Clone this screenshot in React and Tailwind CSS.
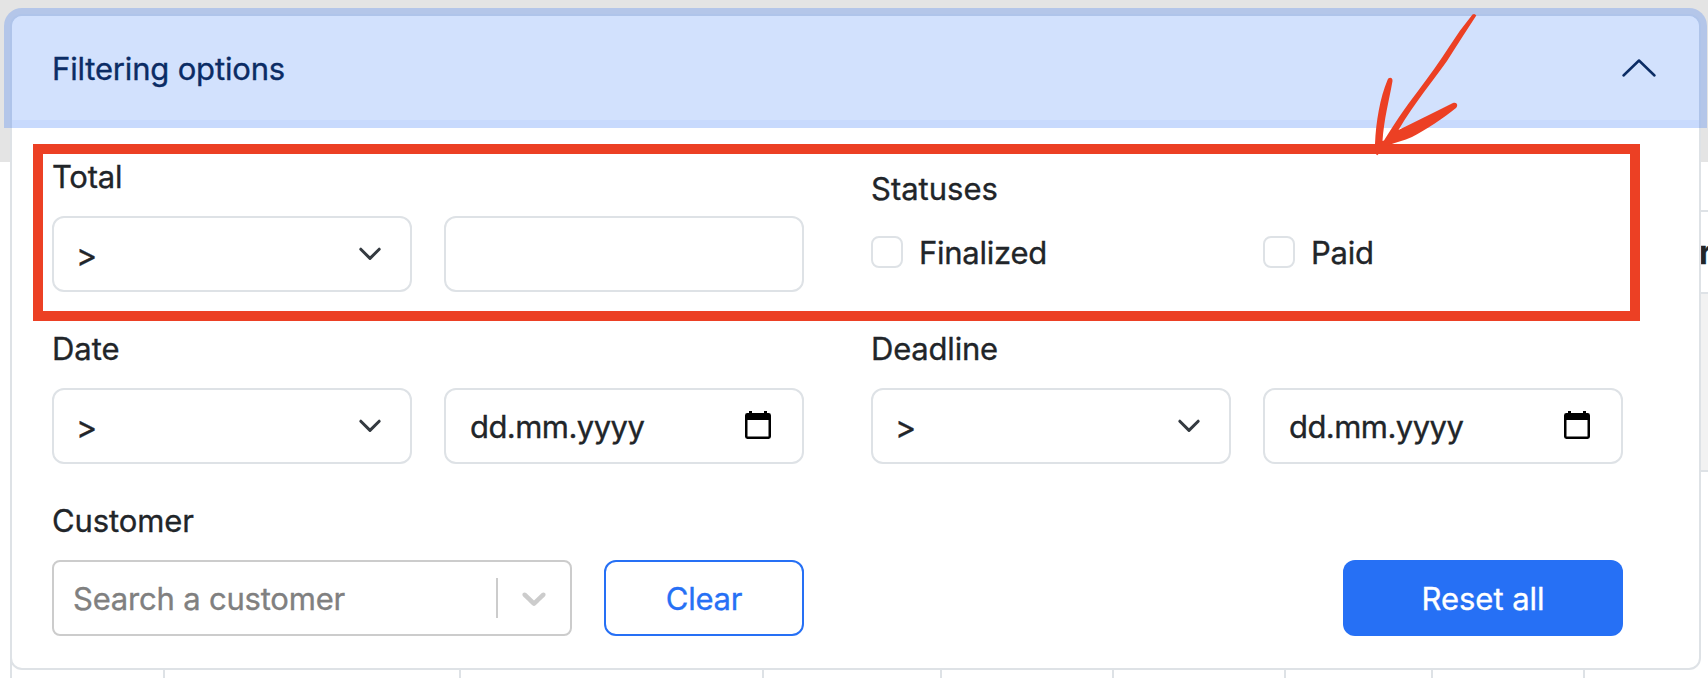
import React from "react";

const columns = [
  { id: "a", cls: "w-[155px]" },
  { id: "b", cls: "w-[296px]" },
  { id: "c", cls: "w-[303px]" },
  { id: "d", cls: "w-[178px]" },
  { id: "e", cls: "w-[172px]" },
  { id: "f", cls: "w-[172px]" },
  { id: "g", cls: "w-[147px]" },
  { id: "h", cls: "w-[152px]" },
];

function TableBackdrop() {
  return (
    <div className="absolute inset-0 flex flex-col bg-white">
      <div className="h-[162px] shrink-0 bg-[#e4e4e4]" />
      <div className="flex h-[310px] shrink-0 justify-end">
        <div className="flex w-[9px] flex-col overflow-hidden">
          <div className="h-[50px] shrink-0 border-b-2 border-[#dee2e6]" />
          <div className="flex h-[82px] shrink-0 items-center border-b-2 border-[#dee2e6] pt-[2px] text-[32px] font-bold">
            r
          </div>
          <div className="h-[178px] shrink-0 border-b-2 border-[#dee2e6] bg-[#f2f2f2]" />
        </div>
      </div>
      <div className="ml-[10px] flex grow">
        {columns.map((c, i) => (
          <div
            key={c.id}
            className={`${c.cls} shrink-0 border-r-2 border-[#dee2e6] ${i === 0 ? "border-l-2" : ""}`}
          />
        ))}
      </div>
    </div>
  );
}

function Label({ children, className = "" }) {
  return <div className={`h-12 leading-[50px] ${className}`}>{children}</div>;
}

function Select() {
  return (
    <button className="flex h-[76px] w-[360px] shrink-0 items-center justify-between rounded-xl border-2 border-[#dee2e6] bg-white pl-[22px] pr-[24px]">
      <span className="pt-[3px] text-[32px]">&gt;</span>
      <svg className="h-8 w-8" viewBox="0 0 16 16" fill="none">
        <path d="m3.4 5.7 4.6 4.6 4.6-4.6" transform="translate(0 -.1)" stroke="#343a40" strokeWidth="1.5" strokeLinecap="round" strokeLinejoin="round" />
      </svg>
    </button>
  );
}

function DateInput() {
  return (
    <div className="flex h-[76px] w-[360px] shrink-0 items-center justify-between rounded-xl border-2 border-[#dee2e6] bg-white pl-[24px] pr-[31px]">
      <span className="pt-[2px] tracking-[-0.55px]">dd.mm.yyyy</span>
      <svg className="mb-[2px] h-7 w-[26px]" viewBox="0 0 26 28">
        <path d="M4 0h3v2h12V0h3v2h1.600A2.400 2.400 0 0 1 26 4.400V25.600A2.400 2.400 0 0 1 23.600 28H2.400A2.400 2.400 0 0 1 0 25.600V4.400A2.400 2.400 0 0 1 2.400 2H4zM2.500 9v16.500h21V9z" fill="#000" fillRule="evenodd" />
      </svg>
    </div>
  );
}

function Check({ label, className }) {
  return (
    <label className="flex w-[360px] items-center">
      <span className="h-8 w-8 shrink-0 rounded-lg border-2 border-[#dee2e6] bg-white" />
      <span className={`ml-4 h-12 leading-[50px] ${className}`}>{label}</span>
    </label>
  );
}

function Arrow() {
  return (
    <svg className="absolute left-[1360px] top-0 h-[170px] w-[130px]" viewBox="1360 0 130 170" fill="#ec4024">
      <path d="M1472.500 14.600Q1474.500 12.800 1476.300 15.500Q1459 42 1447 61C1433 81 1415 102 1398.500 130Q1429 115 1453 103C1457 101.500 1458.500 105.500 1456 108C1444 118 1425 130 1412 137C1404 141 1395 142 1387 146L1378 154.500Q1377 156 1376 154L1375 144C1376 121 1380 98 1387.500 80C1388.500 77 1392.800 77 1392.500 81C1389 101 1384 119 1382.500 141L1384 140.500C1393 126 1404 109 1418 91C1430 75 1440 61 1449 47Q1459 31 1472.500 14.600Z" />
    </svg>
  );
}

export default function App() {
  return (
    <div className="relative h-[678px] w-[1708px] overflow-hidden bg-white pl-[10px] pt-[14px] font-['Inter',sans-serif] text-[31px] text-[#212529] [-webkit-text-stroke:0.35px]">
      <TableBackdrop />
      <div className="relative h-[656px] w-[1691px] rounded-xl border-2 border-[#dee2e6] bg-white">
        <button className="flex h-[104px] w-full items-center justify-between rounded-t-[10px] bg-[#d2e1fd] pl-10 pr-10 text-[#0b2c65] shadow-[0_0_0_8px_rgba(35,107,247,0.25)]">
          <span className="pt-[2px] tracking-[-0.17px]">Filtering options</span>
          <svg className="h-10 w-10" viewBox="0 0 40 40" fill="none">
            <path d="M4.500 27.500 20 12.500l15.500 15" stroke="#0b2c65" strokeWidth="2.500" strokeLinecap="round" strokeLinejoin="round" />
          </svg>
        </button>

        <div className="flex flex-col gap-8 pl-10 pt-7">
          <div className="flex gap-[67px]">
            <div className="flex w-[752px] flex-col gap-4 pt-1">
              <Label className="tracking-[-0.25px]">Total</Label>
              <div className="flex gap-8">
                <Select />
                <div className="h-[76px] w-[360px] rounded-xl border-2 border-[#dee2e6] bg-white" />
              </div>
            </div>
            <div className="flex w-[752px] flex-col gap-4 pt-4">
              <Label>Statuses</Label>
              <div className="flex gap-8">
                <Check label="Finalized" className="tracking-[-0.25px]" />
                <Check label="Paid" className="tracking-[-0.25px]" />
              </div>
            </div>
          </div>

          <div className="flex gap-[67px]">
            <div className="flex w-[752px] flex-col gap-4">
              <Label>Date</Label>
              <div className="flex gap-8">
                <Select />
                <DateInput />
              </div>
            </div>
            <div className="flex w-[752px] flex-col gap-4">
              <Label className="tracking-[-0.2px]">Deadline</Label>
              <div className="flex gap-8">
                <Select />
                <DateInput />
              </div>
            </div>
          </div>

          <div className="flex flex-col gap-4">
            <Label className="tracking-[-0.1px]">Customer</Label>
            <div className="flex">
              <div className="flex h-[76px] w-[520px] items-center rounded-lg border-2 border-[#cccccc] bg-white pl-[19px] pr-4">
                <span className="grow pt-[2px] tracking-[-0.2px] text-[#808080]">Search a customer</span>
                <span className="mr-4 h-10 w-0.5 bg-[#cccccc]" />
                <svg className="h-10 w-10" viewBox="0 0 20 20" fill="#cccccc">
                  <path d="M4.516 7.548c0.436-0.446 1.043-0.481 1.576 0l3.908 3.747 3.908-3.747c0.533-0.481 1.141-0.446 1.574 0 0.436 0.445 0.408 1.197 0 1.615-0.406 0.418-4.695 4.502-4.695 4.502-0.217 0.223-0.502 0.335-0.787 0.335s-0.570-0.112-0.789-0.335c0 0-4.287-4.084-4.695-4.502s-0.436-1.170 0-1.615z" />
                </svg>
              </div>
              <button className="ml-8 h-[76px] w-[200px] rounded-xl border-2 border-[#2670f5] bg-white pt-[2px] tracking-[-0.25px] text-[#2670f5]">
                Clear
              </button>
              <button className="ml-[539px] h-[76px] w-[280px] rounded-xl bg-[#2670f5] pt-[2px] tracking-[-0.05px] text-white">
                Reset all
              </button>
            </div>
          </div>
        </div>
      </div>

      <div className="pointer-events-none absolute left-[33px] top-[144px] h-[177px] w-[1607px] border-[10px] border-[#ec4024]" />
      <Arrow />
    </div>
  );
}
